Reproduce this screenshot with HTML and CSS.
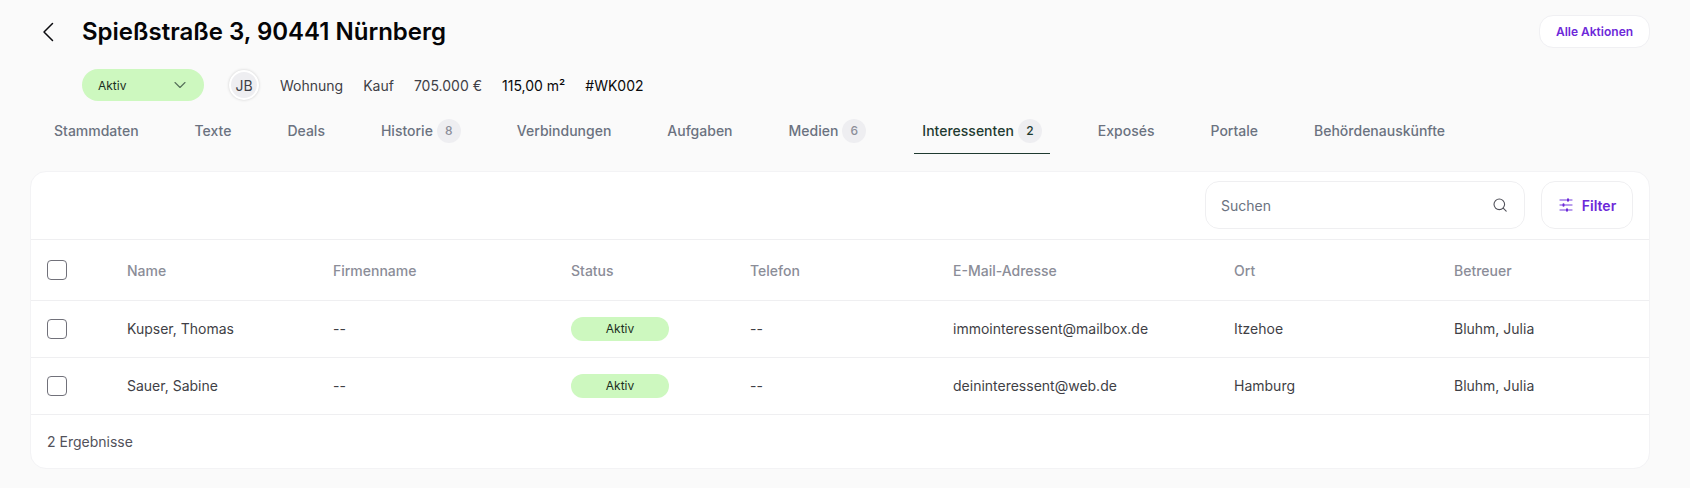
FILE: index.html
```html
<!DOCTYPE html>
<html lang="de">
<head>
<meta charset="utf-8">
<title>Spießstraße 3, 90441 Nürnberg</title>
<link rel="stylesheet" href="styles.css">
</head>
<body>
<header class="head">
  <div class="title-row">
    <button class="back" aria-label="Zurück">
      <svg width="24" height="24" viewBox="0 0 24 24" fill="none" stroke="#0b0b0f" stroke-width="1.5" stroke-linecap="round" stroke-linejoin="round"><path d="M16.5 3.5L8 12l8.5 8.5"/></svg>
    </button>
    <h1>Spießstraße 3, 90441 Nürnberg</h1>
    <button class="actions">Alle Aktionen</button>
  </div>
  <div class="meta-row">
    <div class="status-select">
      <span>Aktiv</span>
      <svg width="16" height="16" viewBox="0 0 16 16" fill="none" stroke="#55705a" stroke-width="1.1" stroke-linecap="round" stroke-linejoin="round"><path d="M3 5.5l5 5 5-5"/></svg>
    </div>
    <div class="avatar">JB</div>
    <span class="meta">Wohnung</span>
    <span class="meta">Kauf</span>
    <span class="meta">705.000 €</span>
    <span class="meta strong">115,00 m²</span>
    <span class="meta strong">#WK002</span>
  </div>
  <nav class="tabs">
    <a class="tab">Stammdaten</a>
    <a class="tab">Texte</a>
    <a class="tab">Deals</a>
    <a class="tab">Historie <span class="count">8</span></a>
    <a class="tab">Verbindungen</a>
    <a class="tab">Aufgaben</a>
    <a class="tab">Medien <span class="count">6</span></a>
    <a class="tab active">Interessenten <span class="count">2</span></a>
    <a class="tab">Exposés</a>
    <a class="tab">Portale</a>
    <a class="tab">Behördenauskünfte</a>
  </nav>
</header>
<main class="card">
  <div class="toolbar">
    <div class="search">
      <span>Suchen</span>
      <svg width="16" height="16" viewBox="0 0 16 16" fill="none" stroke="#52525b" stroke-width="1.1" stroke-linecap="round"><circle cx="7.3" cy="7.3" r="5.3"/><path d="M11.2 11.2l3 3"/></svg>
    </div>
    <button class="filter">
      <svg width="16" height="16" viewBox="0 0 16 16" fill="none" stroke="#a27fe8" stroke-width="1.3" stroke-linecap="round"><path d="M2 3h12M2 8h12M2 13h12"/><path d="M10 2.2v1.6M5.5 7.2v1.6M9 12.2v1.6" stroke="#6d28d9" stroke-width="2"/></svg>
      Filter
    </button>
  </div>
  <table>
    <thead>
      <tr>
        <th class="c-check"><span class="box"></span></th>
        <th class="c-name">Name</th>
        <th class="c-firm">Firmenname</th>
        <th class="c-status">Status</th>
        <th class="c-phone">Telefon</th>
        <th class="c-mail">E-Mail-Adresse</th>
        <th class="c-city">Ort</th>
        <th class="c-owner">Betreuer</th>
      </tr>
    </thead>
    <tbody>
      <tr>
        <td><span class="box"></span></td>
        <td>Kupser, Thomas</td>
        <td>--</td>
        <td><span class="pill">Aktiv</span></td>
        <td>--</td>
        <td>immointeressent@mailbox.de</td>
        <td>Itzehoe</td>
        <td>Bluhm, Julia</td>
      </tr>
      <tr>
        <td><span class="box"></span></td>
        <td>Sauer, Sabine</td>
        <td>--</td>
        <td><span class="pill">Aktiv</span></td>
        <td>--</td>
        <td>deininteressent@web.de</td>
        <td>Hamburg</td>
        <td>Bluhm, Julia</td>
      </tr>
    </tbody>
  </table>
  <footer class="results">2 Ergebnisse</footer>
</main>
</body>
</html>
```

FILE: styles.css
```css
* { box-sizing: border-box; }
html, body { margin: 0; padding: 0; }
body {
  background: #fafafa;
  color: #3f3f46;
  font-family: Inter, "Liberation Sans", sans-serif;
  font-size: 14px;
  height: 488px;
  overflow: hidden;
}
button { font-family: inherit; }

.head { padding: 15px 40px 0 36px; }
.title-row { display: flex; align-items: center; height: 33px; }
.back {
  display: flex;
  width: 24px;
  height: 24px;
  padding: 0;
  margin-right: 22px;
  border: 0;
  background: none;
}
h1 { margin: 0; font-size: 24px; line-height: 32px; font-weight: 600; color: #050507; }
.actions {
  margin-left: auto;
  width: 111px;
  height: 33px;
  padding: 0;
  background: #fff;
  border: 1px solid #f0f0f3;
  border-radius: 14px;
  color: #6d28d9;
  font-size: 12px;
  font-weight: 600;
}

.meta-row { display: flex; align-items: center; gap: 20px; margin: 21px 0 0 46px; height: 32px; }
.status-select {
  display: flex;
  align-items: center;
  justify-content: space-between;
  width: 122px;
  height: 32px;
  padding: 0 16px;
  margin-right: 5px;
  border-radius: 16px;
  background: #cdf8bf;
  color: #1c2f22;
  font-size: 12px;
}
.avatar {
  display: flex;
  align-items: center;
  justify-content: center;
  width: 30px;
  height: 30px;
  margin-right: 1px;
  border-radius: 50%;
  background: #eeeef1;
  border: 2px solid #fff;
  box-shadow: 0 0 3px rgba(0, 0, 0, 0.18);
  color: #3f3f46;
}
.meta { color: #3f3f46; }
.meta.strong { color: #09090b; }

.tabs { display: flex; gap: 40px; margin: 18px 0 0 10px; height: 35px; }
.tab {
  display: flex;
  align-items: flex-start;
  gap: 4px;
  height: 35px;
  padding: 0 8px;
  color: #6b7280;
  font-weight: 500;
  line-height: 24px;
  border-bottom: 1px solid transparent;
}
.tab.active { color: #1f3a30; border-bottom-color: #1f3a30; }
.count {
  width: 24px;
  height: 24px;
  border-radius: 50%;
  background: #eeeef1;
  text-align: center;
  font-size: 12px;
  color: #8b8d98;
}
.active .count { color: #1f3a30; }

.card {
  margin: 17px 40px 0 30px;
  height: 298px;
  background: #fff;
  border: 1px solid #f3f3f5;
  border-radius: 16px;
  overflow: hidden;
}
.toolbar {
  display: flex;
  justify-content: flex-end;
  gap: 16px;
  height: 68px;
  padding: 9px 16px 0 0;
  border-bottom: 1px solid #efeff1;
}
.search {
  display: flex;
  align-items: center;
  justify-content: space-between;
  width: 320px;
  height: 48px;
  padding: 0 16px 0 15px;
  border: 1px solid #efeff1;
  border-radius: 14px;
  color: #6b7280;
}
.filter {
  display: flex;
  align-items: center;
  justify-content: center;
  gap: 8px;
  width: 92px;
  height: 48px;
  padding: 0;
  background: #fff;
  border: 1px solid #efeff1;
  border-radius: 14px;
  color: #6d28d9;
  font-size: 14px;
  font-weight: 600;
}

table { width: 100%; table-layout: fixed; border-collapse: collapse; }
th, td { padding: 0; text-align: left; vertical-align: middle; border-bottom: 1px solid #efeff1; }
th:first-child, td:first-child { padding-left: 16px; }
th { height: 60px; color: #8b8d98; font-weight: 500; }
th + th { padding-top: 2px; }
td { height: 57px; color: #3f3f46; }
.c-check { width: 96px; }
.c-name { width: 206px; }
.c-firm { width: 238px; }
.c-status { width: 179px; }
.c-phone { width: 203px; }
.c-mail { width: 281px; }
.c-city { width: 220px; }
.box {
  display: block;
  width: 20px;
  height: 20px;
  border: 1px solid #71717a;
  border-radius: 4px;
  background: #fff;
}
.pill {
  display: block;
  width: 98px;
  height: 24px;
  border-radius: 12px;
  background: #cdf8bf;
  color: #1c2f22;
  font-size: 12px;
  line-height: 24px;
  text-align: center;
}
.results { padding: 17px 16px; line-height: 20px; color: #52525b; }
```
